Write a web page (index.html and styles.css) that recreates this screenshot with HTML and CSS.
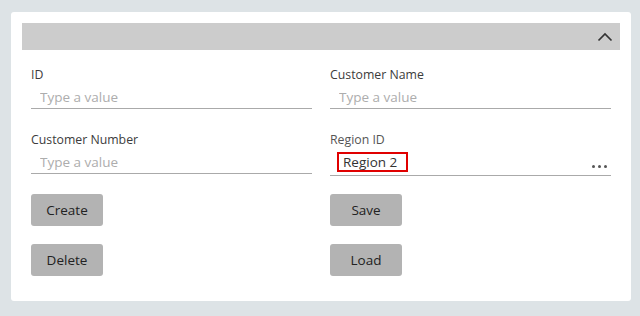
FILE: index.html
```html
<!DOCTYPE html>
<html lang="en">
<head>
<meta charset="utf-8">
<title>Customer</title>
<link rel="stylesheet" href="styles.css">
</head>
<body>
<div class="card">
  <div class="card-header">
    <svg class="chevron" width="16" height="10" viewBox="0 0 16 10"><polyline points="1.5,8.5 8,2 14.5,8.5" fill="none" stroke="#333" stroke-width="1.7"/></svg>
  </div>
  <div class="form">
    <div class="fields">
      <div class="field">
        <label class="label">ID</label>
        <input class="input" type="text" placeholder="Type a value">
      </div>
      <div class="field">
        <label class="label">Customer Name</label>
        <input class="input" type="text" placeholder="Type a value">
      </div>
      <div class="field">
        <label class="label">Customer Number</label>
        <input class="input" type="text" placeholder="Type a value">
      </div>
      <div class="field">
        <label class="label label-muted">Region ID</label>
        <div class="lookup">
          <span class="lookup-value">Region 2</span>
          <svg class="dots" width="15" height="3" viewBox="0 0 15 3"><circle cx="1.5" cy="1.5" r="1.5" fill="#555"/><circle cx="7.5" cy="1.5" r="1.5" fill="#555"/><circle cx="13.5" cy="1.5" r="1.5" fill="#555"/></svg>
        </div>
      </div>
    </div>
    <div class="actions">
      <button class="btn">Create</button>
      <button class="btn">Save</button>
      <button class="btn">Delete</button>
      <button class="btn">Load</button>
    </div>
  </div>
</div>
</body>
</html>
```
FILE: styles.css
```css
* { box-sizing: border-box; }
html, body { margin: 0; padding: 0; }
body {
  background: #dde3e6;
  font-family: "Open Sans", "Noto Sans", sans-serif;
  font-size: 13px;
  color: #444;
  width: 640px;
  height: 316px;
  overflow: hidden;
}
.card {
  margin: 12px 0 0 11px;
  width: 620px;
  background: #fff;
  border-radius: 3px;
  padding: 11px 11px 0 11px;
}
.card-header {
  height: 27px;
  background: #cccccc;
  display: flex;
  align-items: center;
  justify-content: flex-end;
  padding-right: 7px;
}
.chevron { display: block; }
.form {
  padding: 15px 9px 25px 9px;
}
.fields {
  display: grid;
  grid-template-columns: 281px 281px;
  column-gap: 18px;
  row-gap: 21px;
  align-items: start;
}
.field {
  display: flex;
  flex-direction: column;
}
.label {
  height: 20px;
  line-height: 20px;
  font-size: 12.3px;
  color: #3c3c3c;
}
.label-muted { color: #555; }
.input {
  height: 24px;
  border: 0;
  border-bottom: 1px solid #aaa;
  padding: 0 9px;
  font: inherit;
  font-size: 13.5px;
  color: #333;
  outline: none;
  background: transparent;
}
.input::placeholder { color: #adadad; }
.lookup {
  height: 26px;
  border-bottom: 1px solid #aaa;
  display: flex;
  align-items: flex-start;
  justify-content: space-between;
  padding: 2px 4px 0 7px;
}
.lookup-value {
  width: 71px;
  height: 20px;
  line-height: 16px;
  border: 2px solid #e00000;
  padding: 0 0 0 4px;
  color: #333;
  font-size: 13.5px;
  white-space: nowrap;
}
.dots { margin-top: 13px; display: block; }
.actions {
  margin-top: 18px;
  display: grid;
  grid-template-columns: 281px 281px;
  column-gap: 18px;
  row-gap: 18px;
}
.btn {
  width: 72px;
  height: 32px;
  background: #b3b3b3;
  border: 0;
  border-radius: 3px;
  font: inherit;
  font-size: 13.5px;
  color: #222;
  padding: 0;
}
```
